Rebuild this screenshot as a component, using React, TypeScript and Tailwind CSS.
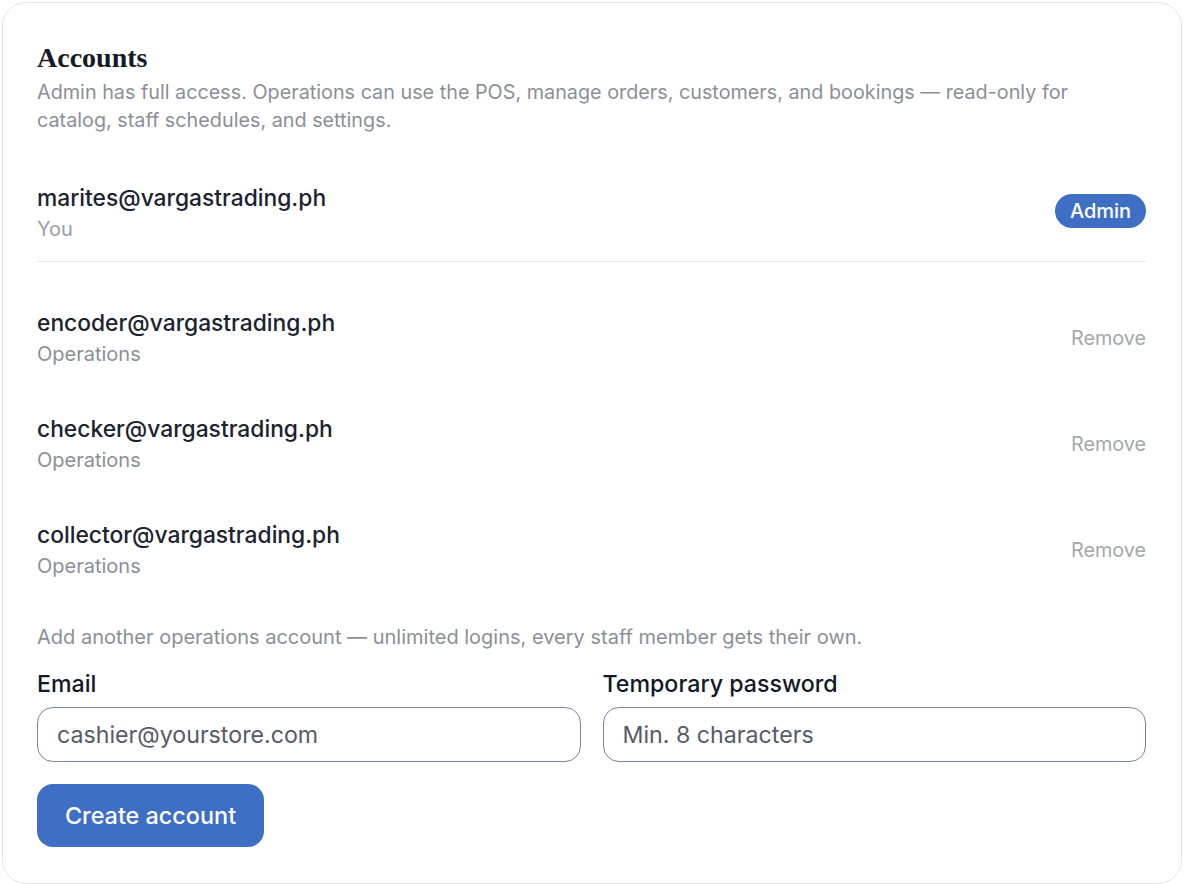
import { useState } from "react";

const sans = "font-['Inter','Liberation_Sans',sans-serif]";

const operators = [
  "encoder@vargastrading.ph",
  "checker@vargastrading.ph",
  "collector@vargastrading.ph",
];

export default function App() {
  const [email, setEmail] = useState("");
  const [password, setPassword] = useState("");

  return (
    <div className={`min-h-screen bg-white p-[2px] ${sans}`}>
      <div className="h-[882px] rounded-[24px] border border-[#e4e4e7] bg-white pl-[34px] pr-[35px] pt-[39px] pb-[35px]">
        {/* Header */}
        <h2 className="font-['Liberation_Serif','DejaVu_Serif',serif] text-[28px] leading-[32px] font-bold text-[#151b26]">
          Accounts
        </h2>
        <p className="mt-1 max-w-[1080px] text-[19.8px] leading-[28px] text-[#8a8f98]">
          Admin has full access. Operations can use the POS, manage orders, customers, and bookings — read-only for
          catalog, staff schedules, and settings.
        </p>

        {/* Owner */}
        <div className="mt-[49px] flex items-center justify-between border-b border-[#e6e7ea] pb-[16px]">
          <div>
            <div className="text-[22.8px] leading-[30px] font-medium text-[#1b2230]">marites@vargastrading.ph</div>
            <div className="text-[20px] leading-[32px] text-[#9a9ea6]">You</div>
          </div>
          <span className="mb-[7px] flex h-[34px] w-[91px] items-center justify-center rounded-full bg-[#3e6fc4] text-[20px] font-medium text-white">
            Admin
          </span>
        </div>

        {/* Operations accounts */}
        <div className="flex flex-col gap-[44px] pt-[46px]">
          {operators.map((op) => (
            <div key={op} className="flex items-center justify-between">
              <div>
                <div className="text-[22.8px] leading-[30px] font-medium text-[#1b2230]">{op}</div>
                <div className="text-[20px] leading-[32px] text-[#8a8f98]">Operations</div>
              </div>
              <button className="text-[19.8px] text-[#a3a7ae]">Remove</button>
            </div>
          ))}
        </div>

        <p className="mt-[41px] text-[20px] leading-[28px] text-[#8a8f98]">
          Add another operations account — unlimited logins, every staff member gets their own.
        </p>

        {/* Create form */}
        <div className="mt-[18px] grid grid-cols-2 gap-[22px]">
          <label className="flex flex-col gap-[8px]">
            <span className="text-[23.2px] leading-[30px] font-medium text-[#111827]">Email</span>
            <input
              value={email}
              onChange={(e) => setEmail(e.target.value)}
              placeholder="cashier@yourstore.com"
              className="h-[55px] rounded-[16px] border border-[#7886a3] px-[19px] text-[23.2px] text-[#1b2230] outline-none placeholder:text-[#555b67]"
            />
          </label>
          <label className="flex flex-col gap-[8px]">
            <span className="text-[23.2px] leading-[30px] font-medium text-[#111827]">Temporary password</span>
            <input
              value={password}
              onChange={(e) => setPassword(e.target.value)}
              placeholder="Min. 8 characters"
              className="h-[55px] rounded-[16px] border border-[#7886a3] px-[19px] text-[23.2px] text-[#1b2230] outline-none placeholder:text-[#555b67]"
            />
          </label>
        </div>

        <button className="mt-[22px] h-[63px] w-[227px] rounded-[16px] bg-[#3e6fc4] text-[23.4px] font-medium text-white">
          Create account
        </button>
      </div>
    </div>
  );
}
